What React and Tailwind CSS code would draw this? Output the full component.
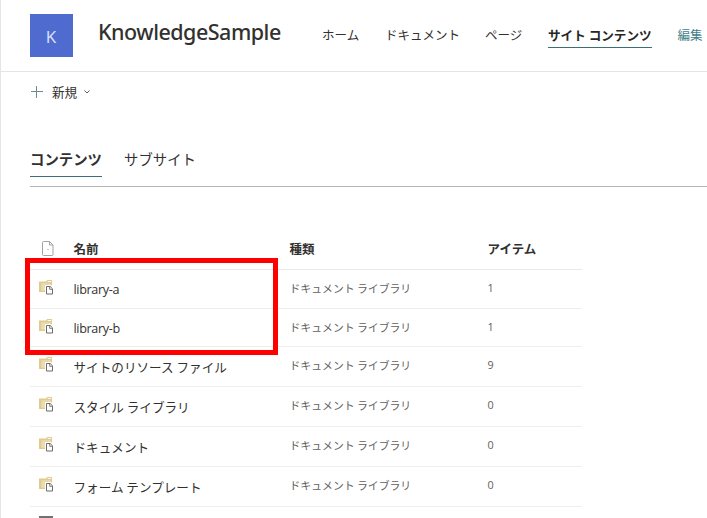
const rows = [
  { name: 'library-a', items: 1, h: 'h-[39px]', latin: true },
  { name: 'library-b', items: 1, h: 'h-[38px]', latin: true },
  { name: 'サイトのリソース ファイル', items: 9, h: 'h-10' },
  { name: 'スタイル ライブラリ', items: 0, h: 'h-10' },
  { name: 'ドキュメント', items: 0, h: 'h-10' },
  { name: 'フォーム テンプレート', items: 0, h: 'h-10' },
];

function FolderIcon() {
  return (
    <svg width="15" height="15" viewBox="0 0 15 15" className="block" fill="none">
      <path d="M0 1.6h7.2L8 0h5v12H0z" fill="#e0ca8e" />
      <path d="M8.6 1.5h3.6" stroke="#fff" strokeWidth=".9" />
      <path d="M2.5 3.5h9v7h-9z" fill="#f0e4c2" />
      <path d="M3.5 5h1M5.5 5h4M3.5 7h1M5.5 7h2M3.5 9h1" stroke="#d8c07c" strokeWidth=".9" />
      <path d="M6 5h6l3 3v7H6z" fill="#fff" />
      <path d="M7.5 6.5h3.7l2.3 2.3v5.2h-6z" fill="#fff" stroke="#6b6b6b" />
      <path d="M10.7 6.5v2.8h2.8" stroke="#6b6b6b" strokeWidth=".9" />
    </svg>
  );
}

function PageIcon() {
  return (
    <svg width="12" height="15" viewBox="0 0 12 15" className="block" fill="none" stroke="#a5a19f">
      <path d="M1.5.5h6l3.5 3.5v9.5a1 1 0 0 1-1 1H1.5a1 1 0 0 1-1-1v-12a1 1 0 0 1 1-1z" />
      <path d="M7.5.5V4H11" />
      <path d="M5.5 8.5h1" stroke="#b18c78" />
    </svg>
  );
}

const columns = 'grid grid-cols-[43.5px_216px_198px_94.5px]';

export default function App() {
  return (
    <div className="relative h-[518px] w-[707px] overflow-hidden border-l border-[#e5e5e5] bg-white font-['Open_Sans','Noto_Sans_CJK_JP',sans-serif] text-[#323130]">
      <header className="flex h-[72px] border-b border-[#e5e5e5] pl-[29px] whitespace-nowrap">
        <div className="mt-3.5 flex h-[43px] w-[43px] items-center justify-center bg-[#4f6bd0] text-[17px] leading-none text-[#dce2f7]">
          <span className="mt-px mr-px">K</span>
        </div>
        <h1 className="ml-[25px] w-[224px] pt-[18px] font-['Noto_Sans'] text-[21.5px] leading-[28px] font-medium tracking-[-0.5px]">
          KnowledgeSample
        </h1>
        <nav className="flex items-start pt-[25px] font-['Noto_Sans_CJK_JP'] text-[12.5px] leading-[20px]">
          <a className="w-[63px]">ホーム</a>
          <a className="w-[100px]">ドキュメント</a>
          <a className="w-[63px]">ページ</a>
          <a className="h-[23px] w-[104px] border-b border-[#3c6e75] text-[12.6px] font-bold text-[#272625]">サイト コンテンツ</a>
          <a className="ml-[25.5px] text-[#3f7f87]">編集</a>
        </nav>
      </header>

      <div className="flex h-[39px] items-center pl-[30px] font-['Noto_Sans_CJK_JP'] text-[12.6px]">
        <svg width="12" height="12" viewBox="0 0 12 12" fill="none" stroke="#6f8b8f">
          <path d="M0 5.5h12M5.5 0v12" />
        </svg>
        <span className="mt-px ml-[9px]">新規</span>
        <svg className="ml-[7px]" width="6" height="4" viewBox="0 0 6 4" fill="none" stroke="#605e5c">
          <path d="M.4.5 3 3 5.6.5" />
        </svg>
      </div>

      <div className="mt-[37px] ml-[29px] flex h-[39px] items-start border-b border-[#b5b5b5] font-['Noto_Sans_CJK_JP'] text-[14.4px] leading-[22px]">
        <a className="h-[29px] w-[72px] border-b border-[#397179] font-bold">コンテンツ</a>
        <a className="ml-[22px]">サブサイト</a>
      </div>

      <section className="mt-[43px] ml-[29px] w-[552px]">
        <div className={`${columns} h-10 border-b border-[#e9e9e9] font-['Noto_Sans_CJK_JP'] text-[12.5px] leading-[20px] font-bold`}>
          <div className="pt-[11px] pl-[12px]"><PageIcon /></div>
          <div className="pt-[9px]">名前</div>
          <div className="pt-[9px]">種類</div>
          <div className="pt-[9px]">アイテム</div>
        </div>
        {rows.map((row) => (
          <div key={row.name} className={`${columns} ${row.h} border-b border-[#eee]`}>
            <div className="pt-[10px] pl-[9px]"><FolderIcon /></div>
            <div className={row.latin ? 'pt-[10px] text-[12.6px] leading-[20px] tracking-[-0.35px]' : "pt-[10px] font-['Noto_Sans_CJK_JP'] text-[12.6px] leading-[20px]"}>{row.name}</div>
            <div className="pt-[8px] font-['Noto_Sans_CJK_JP'] text-[10.85px] leading-[20px] text-[#605e5c]">ドキュメント ライブラリ</div>
            <div className="pt-[8px] text-[10.8px] leading-[20px] text-[#605e5c]">{row.items}</div>
          </div>
        ))}
        <div className="mt-[9px] ml-[9px] h-3.5 w-3.5 bg-[#717171]" />
      </section>

      <div className="absolute top-[258px] left-[24px] h-[97px] w-[253px] border-[5px] border-[#ff0000]" />
    </div>
  );
}
